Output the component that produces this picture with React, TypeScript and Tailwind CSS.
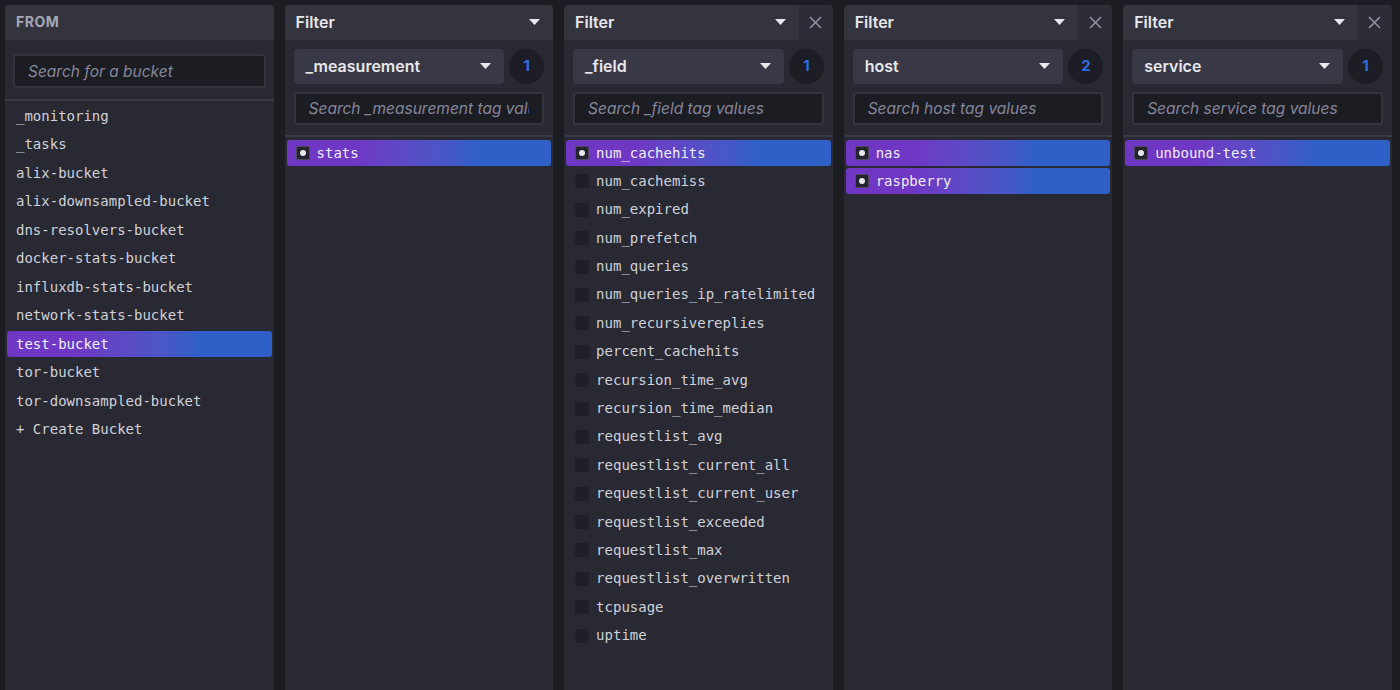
import React from "react";

type Item = { name: string; selected?: boolean };
type Filter = {
  tag: string;
  count: number;
  closable: boolean;
  items: Item[];
};

const buckets: Item[] = [
  { name: "_monitoring" },
  { name: "_tasks" },
  { name: "alix-bucket" },
  { name: "alix-downsampled-bucket" },
  { name: "dns-resolvers-bucket" },
  { name: "docker-stats-bucket" },
  { name: "influxdb-stats-bucket" },
  { name: "network-stats-bucket" },
  { name: "test-bucket", selected: true },
  { name: "tor-bucket" },
  { name: "tor-downsampled-bucket" },
  { name: "+ Create Bucket" },
];

const fields = [
  "num_cachehits",
  "num_cachemiss",
  "num_expired",
  "num_prefetch",
  "num_queries",
  "num_queries_ip_ratelimited",
  "num_recursivereplies",
  "percent_cachehits",
  "recursion_time_avg",
  "recursion_time_median",
  "requestlist_avg",
  "requestlist_current_all",
  "requestlist_current_user",
  "requestlist_exceeded",
  "requestlist_max",
  "requestlist_overwritten",
  "tcpusage",
  "uptime",
].map((name, i) => ({ name, selected: i === 0 }));

const filters: Filter[] = [
  { tag: "_measurement", count: 1, closable: false, items: [{ name: "stats", selected: true }] },
  { tag: "_field", count: 1, closable: true, items: fields },
  {
    tag: "host",
    count: 2,
    closable: true,
    items: [
      { name: "nas", selected: true },
      { name: "raspberry", selected: true },
    ],
  },
  { tag: "service", count: 1, closable: true, items: [{ name: "unbound-test", selected: true }] },
];

const ui = { fontFamily: "Inter, 'Noto Sans', sans-serif" };
const mono = { fontFamily: "'DejaVu Sans Mono', 'Liberation Mono', monospace" };

const Caret = () => (
  <svg width="11" height="6" viewBox="0 0 11 6" className="text-[#e7e8eb]">
    <path d="M0 0H11L5.5 6Z" fill="currentColor" />
  </svg>
);

const Close = () => (
  <svg width="13" height="13" viewBox="0 0 13 13" className="text-[#8e91a1]">
    <path d="M1 1L12 12M12 1L1 12" stroke="currentColor" strokeWidth="1.6" />
  </svg>
);

const Checkbox = ({ checked }: { checked?: boolean }) =>
  checked ? (
    <span className="flex h-[14px] w-[14px] items-center justify-center rounded-[2px] border border-[#4a4a5a] bg-[#24242e]">
      <span className="h-[6px] w-[6px] rounded-full bg-[#e7e8eb]" />
    </span>
  ) : (
    <span className="h-[14px] w-[14px] rounded-[2px] bg-[#1f1f27]" />
  );

const Row = ({ item, check }: { item: Item; check?: boolean }) => (
  <div
    className={`flex h-[26px] items-center gap-[7px] rounded-[3px] px-[9px] text-[14px] ${
      item.selected
        ? "bg-linear-to-r from-[#7036c4] from-25% to-[#2f60c8] to-72% text-[#eeeff2]"
        : "text-[#cfd1d9]"
    }`}
    style={mono}
  >
    {check && <Checkbox checked={item.selected} />}
    <span>{item.name}</span>
  </div>
);

const SearchBox = ({ placeholder, className }: { placeholder: string; className: string }) => (
  <input
    readOnly
    placeholder={placeholder}
    className={`w-full rounded-[3px] border-2 border-[#34343f] bg-[#1c1c23] text-[15.5px] italic outline-none placeholder:text-[#84879a] ${className}`}
    style={ui}
  />
);

const FromPanel = () => (
  <div className="flex flex-1 flex-col overflow-hidden rounded-t-[4px] bg-[#292933]">
    <div className="flex h-[35px] shrink-0 items-center bg-[#34343f] px-[11px] pb-[3px]">
      <span className="text-[14px] font-bold tracking-[0.5px] text-[#a4a8b6]" style={ui}>
        FROM
      </span>
    </div>
    <div className="border-b-2 border-[#383846] px-[8px] pb-[11px] pt-[14px]">
      <SearchBox placeholder="Search for a bucket" className="h-[34px] px-[13px]" />
    </div>
    <div className="flex flex-col gap-[2.5px] px-[2px] pt-[2px]">
      {buckets.map((b) => (
        <Row key={b.name} item={b} />
      ))}
    </div>
  </div>
);

const FilterPanel = ({ f }: { f: Filter }) => (
  <div className="flex flex-1 flex-col overflow-hidden rounded-t-[4px] bg-[#292933]">
    <div className="flex h-[35px] shrink-0">
      <div className="flex flex-1 items-center justify-between bg-[#34343f] pb-[2px] pl-[11px] pr-[13px]">
        <span className="text-[16px] font-semibold text-[#e7e8eb]" style={ui}>
          Filter
        </span>
        <Caret />
      </div>
      {f.closable && (
        <div className="flex w-[34px] items-center justify-center bg-[#2d2d38]">
          <Close />
        </div>
      )}
    </div>
    <div className="border-b-2 border-[#383846] px-[9px] pb-[10px] pt-[9px]">
      <div className="flex items-center gap-[5px]">
        <div className="flex h-[35px] flex-1 items-center justify-between rounded-[4px] bg-[#383846] pb-[2px] pl-[12px] pr-[13px]">
          <span className="text-[16px] font-semibold text-[#e7e8eb]" style={ui}>
            {f.tag}
          </span>
          <Caret />
        </div>
        <div className="flex h-[35px] w-[35px] items-center justify-center rounded-full bg-[#1d1d25]">
          <span className="text-[15px] font-bold text-[#2f6ee0]" style={ui}>
            {f.count}
          </span>
        </div>
      </div>
      <SearchBox placeholder={`Search ${f.tag} tag values`} className="mt-[8px] h-[33px] px-[13px]" />
    </div>
    <div className="flex flex-col gap-[2.4px] px-[2px] pt-[3px]">
      {f.items.map((it) => (
        <Row key={it.name} item={it} check />
      ))}
    </div>
  </div>
);

export default function App() {
  return (
    <div className="flex h-screen gap-[10.75px] overflow-hidden bg-[#1c1c23] pl-[5px] pr-[8px] pt-[5px]">
      <FromPanel />
      {filters.map((f) => (
        <FilterPanel key={f.tag} f={f} />
      ))}
    </div>
  );
}
